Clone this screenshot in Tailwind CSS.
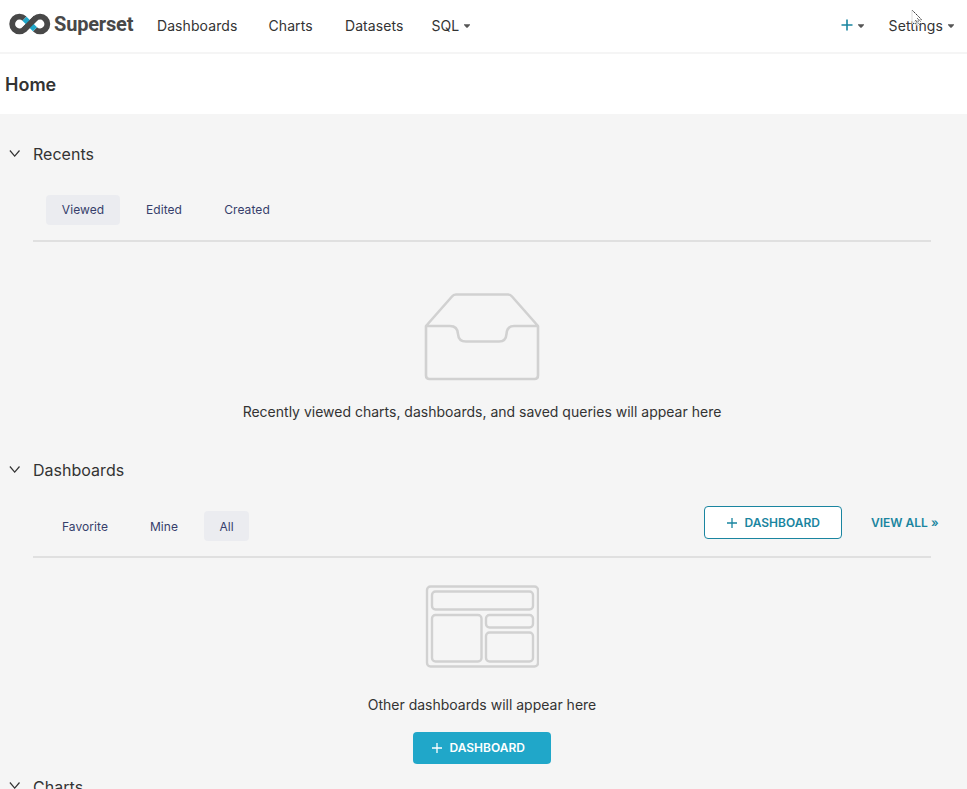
<!DOCTYPE html>
<html lang="en">
<head>
<meta charset="utf-8">
<title>Superset</title>
<script src="https://cdn.jsdelivr.net/npm/@tailwindcss/browser@4"></script>
</head>
<body class="h-[789px] overflow-hidden bg-[#f5f5f5] font-['Inter',sans-serif] text-sm text-[#333]">
<header class="relative flex h-[54px] items-center border-b-2 border-[#f5f5f5] bg-white">
  <a class="ml-[9px] flex w-[148px] items-center">
    <svg class="-mt-[5px] h-[22px] w-[42px] shrink-0" viewBox="0 0 42 22" fill="none" stroke-width="5.800">
      <path d="M15.500 5.700A7.300 7.300 0 1 0 15.500 16.300L26 5.700A7.300 7.300 0 1 1 26 16.300" stroke="#484848"/>
      <path d="M15.500 5.700L26 16.300" stroke="#20a7c9"/>
      <path d="M14.500 17.200L27 4.800" stroke="#484848"/>
    </svg>
    <span class="-mt-[5px] ml-[3px] font-['Roboto',sans-serif] text-[20px] leading-6 font-bold tracking-[-0.18px] text-[#484848]">Superset</span>
  </a>
  <nav class="-mt-px flex items-center tracking-[0.08px]">
    <a class="w-[111.500px]">Dashboards</a>
    <a class="w-[76.500px]">Charts</a>
    <a class="w-[86.500px]">Datasets</a>
    <a class="flex items-center gap-[5px]"><span>SQL</span>
      <svg class="h-1 w-[6px]" viewBox="0 0 6 4"><path d="M0 .3h6v.6L3.500 3.800h-1L0 .9z" fill="#555"/></svg></a>
  </nav>
  <div class="-mt-px mr-[13px] ml-auto flex items-center tracking-[0.1px]">
    <svg class="-mt-px h-3 w-3" viewBox="0 0 12 12"><path d="M6 .5v11M.5 6h11" stroke="#1a85a0" stroke-width="1.600"/></svg>
    <svg class="mr-[25px] ml-[5px] h-1 w-[6px]" viewBox="0 0 6 4"><path d="M0 .3h6v.6L3.500 3.800h-1L0 .9z" fill="#555"/></svg>
    <span>Settings</span>
    <svg class="ml-[5px] h-1 w-[6px]" viewBox="0 0 6 4"><path d="M0 .3h6v.6L3.500 3.800h-1L0 .9z" fill="#555"/></svg>
  </div>
  <svg class="absolute top-[9px] left-[911px] h-[18px] w-3" viewBox="0 0 12 18"><path d="M1 1v14l3.200-3 2.200 5 2.400-1-2.200-5H11z" fill="#fff" fill-opacity=".6" stroke="#ddd"/><path d="M1.500 1.500l9 9" stroke="#222" stroke-dasharray="1.400 1"/><path d="M4 15l6-5M4 11l5 5M6 9l4 4" stroke="#444" stroke-width="1" stroke-dasharray="1 1"/></svg>
</header>
<div class="flex h-[60px] items-center bg-white pt-px pl-[5px]"><h1 class="text-lg font-semibold">Home</h1></div>
<main>
  <section class="h-[316px]">
    <h2 class="flex h-20 items-center"><svg class="mr-[13px] -mt-[2px] ml-[9px] h-[7px] w-[11px]" viewBox="0 0 11 7" fill="none"><path d="M.9.500l4.800 5.600L10.500.5" stroke="#333" stroke-width="1.200"/></svg><span class="text-base tracking-[0.02px]">Recents</span></h2>
    <div class="mr-9 ml-[33px] flex h-12 items-start border-b-2 border-[#e0e0e0] pt-px pl-[13px] text-xs tracking-[0.08px] text-[#363e6b]">
      <span class="flex h-[30px] w-[74px] items-center justify-center rounded bg-[#ebecf0]">Viewed</span>
      <span class="ml-[10px] flex h-[30px] w-[68px] items-center justify-center">Edited</span>
      <span class="ml-[10px] flex h-[30px] w-[78px] items-center justify-center">Created</span>
    </div>
    <div class="mr-9 ml-[33px] flex flex-col items-center">
      <svg class="mt-[50px] h-[90px] w-[116px]" viewBox="0 0 116 90" fill="none" stroke="#d1d1d1" stroke-width="2.600" stroke-linejoin="round"><path d="M2 34L28 4.500Q29.500 2.500 32 2.500H84Q86.500 2.500 88 4.500L114 34V83.500Q114 87 110.500 87H5.500Q2 87 2 83.500ZM2 34H26Q33.500 34 34 42Q34.500 49.500 42 49.500H75Q82 49.500 82.500 42Q83 34 90 34H114"/></svg>
      <p class="mt-5 leading-5">Recently viewed charts, dashboards, and saved queries will appear here</p>
    </div>
  </section>
  <section class="h-[316px]">
    <h2 class="flex h-20 items-center"><svg class="mr-[13px] -mt-[2px] ml-[9px] h-[7px] w-[11px]" viewBox="0 0 11 7" fill="none"><path d="M.9.500l4.800 5.600L10.500.5" stroke="#333" stroke-width="1.200"/></svg><span class="text-base tracking-[0.02px]">Dashboards</span></h2>
    <div class="ml-[33px] flex h-[48px] w-[898px] items-start border-b-2 border-[#e0e0e0] pt-px pl-[13px] text-xs text-[#363e6b]">
      <span class="flex h-[30px] w-[78px] shrink-0 items-center justify-center pt-px tracking-[0.08px]">Favorite</span>
      <span class="ml-[10px] flex h-[30px] w-[60px] shrink-0 items-center justify-center pt-px tracking-[0.08px]">Mine</span>
      <span class="ml-[10px] flex h-[30px] w-[45px] shrink-0 items-center justify-center rounded bg-[#ebecf0] pt-px">All</span>
      <button class="-mt-[5px] ml-[455px] flex h-[33px] w-[138px] shrink-0 items-center rounded border border-[#1a85a0] bg-white pl-[21.500px] font-semibold text-[#1a85a0]"><svg class="mr-2 h-[10px] w-[10px]" viewBox="0 0 10 10"><path d="M5 0v10M0 5h10" stroke="currentColor" stroke-width="1.300"/></svg>DASHBOARD</button>
      <span class="mt-1 ml-[29px] shrink-0 font-semibold whitespace-nowrap text-[#1a85a0]">VIEW ALL »</span>
    </div>
    <div class="mr-9 ml-[33px] flex flex-col items-center">
      <svg class="mt-[27px] h-[84px] w-[114px]" viewBox="0 0 114 84" fill="none" stroke="#d1d1d1" stroke-width="2.400"><rect x="2" y="1.500" width="111" height="80" rx="3.500"/><rect x="7" y="6.500" width="101" height="18" rx="3.500"/><rect x="7" y="30" width="49.500" height="46.500" rx="3.500"/><rect x="61" y="30" width="47" height="12.500" rx="3.500"/><rect x="61" y="47.500" width="47" height="29" rx="3.500"/></svg>
      <p class="mt-[26px] leading-5">Other dashboards will appear here</p>
      <button class="mt-[16.500px] flex h-8 w-[138px] items-center rounded bg-[#20a7c9] pl-[18.500px] text-xs font-semibold text-white"><svg class="mr-2 h-[10px] w-[10px]" viewBox="0 0 10 10"><path d="M5 0v10M0 5h10" stroke="currentColor" stroke-width="1.300"/></svg>DASHBOARD</button>
    </div>
  </section>
  <section>
    <h2 class="flex h-20 items-center pt-px"><svg class="mr-[13px] -mt-[2px] ml-[9px] h-[7px] w-[11px]" viewBox="0 0 11 7" fill="none"><path d="M.9.500l4.800 5.600L10.500.5" stroke="#333" stroke-width="1.200"/></svg><span class="text-base tracking-[0.05px]">Charts</span></h2>
  </section>
</main>
</body>
</html>
